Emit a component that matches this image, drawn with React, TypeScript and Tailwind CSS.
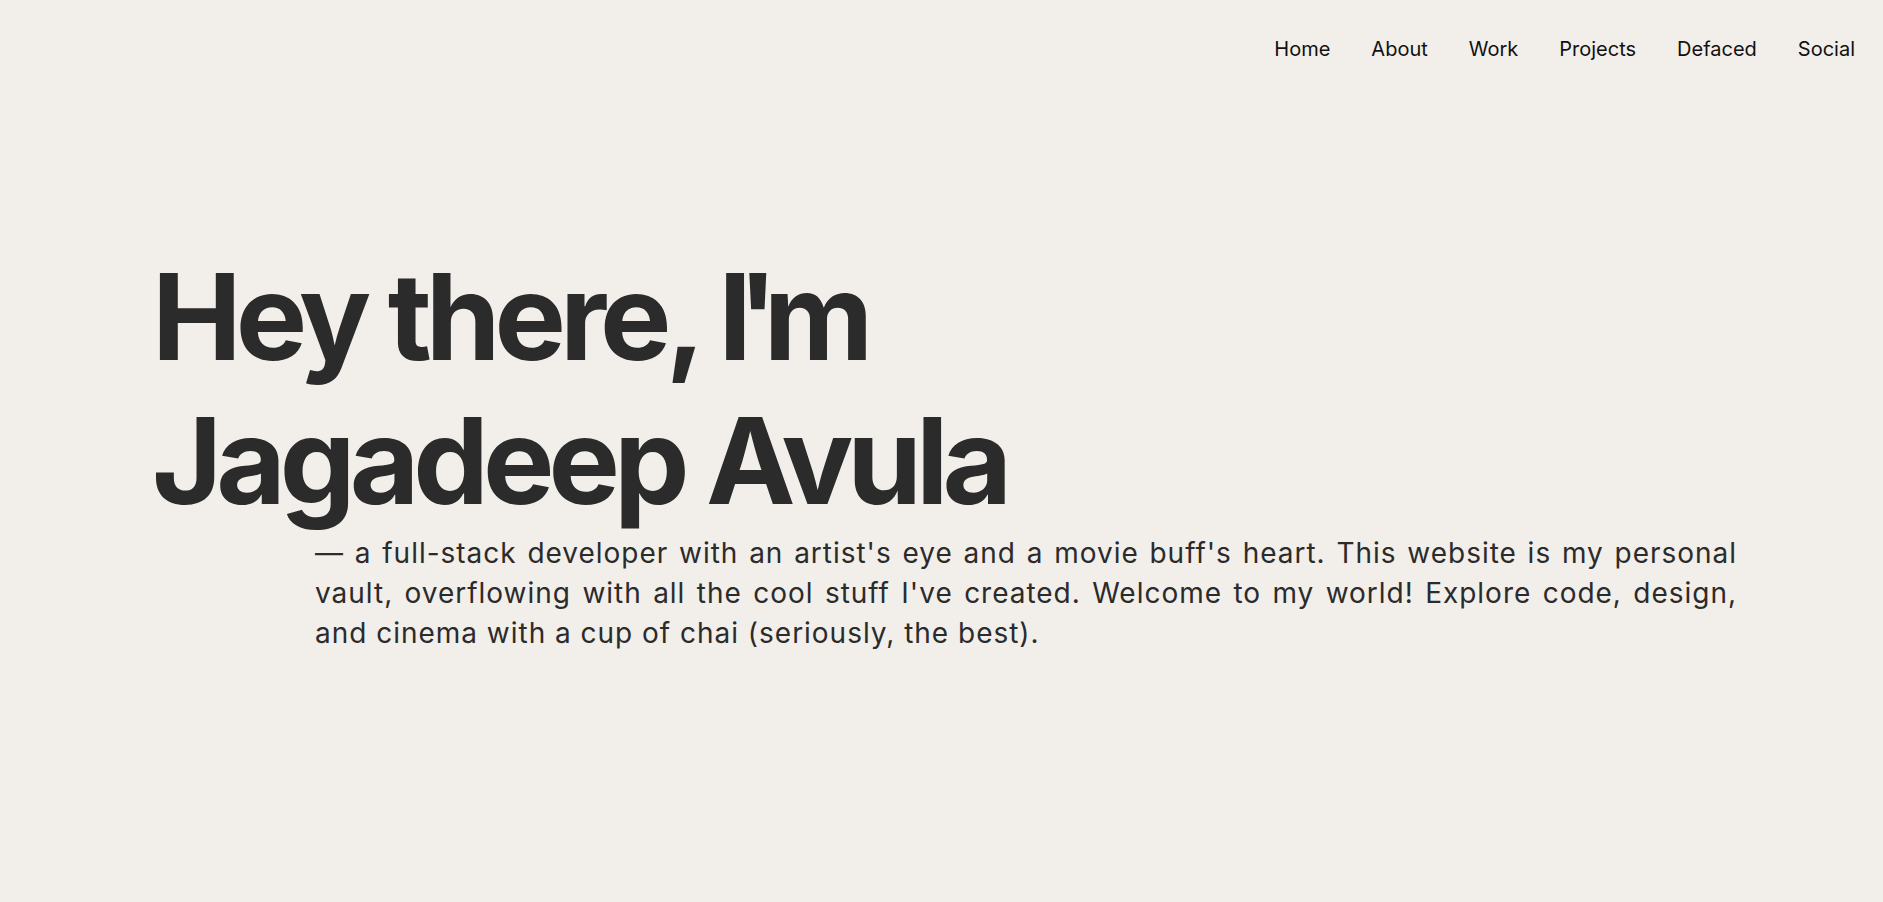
import React from "react";

const links = ["Home", "About", "Work", "Projects", "Defaced", "Social"];

const Navbar = () => {
  return (
    <nav className="flex justify-end pt-[33px] pr-[28px]">
      <ul className="flex items-center gap-[41px]">
        {links.map((link) => (
          <li key={link}>
            <a href="#" className="text-[20px] leading-[32px] text-[#111111]">
              {link}
            </a>
          </li>
        ))}
      </ul>
    </nav>
  );
};

export default function App() {
  return (
    <div
      className="min-h-screen w-full bg-[#f2eeea] text-[#2b2b2b]"
      style={{ fontFamily: "Inter, 'Noto Sans', sans-serif" }}
    >
      <Navbar />
      <main className="pl-[152px] pr-[146px] pt-[180px]">
        <h1 className="text-[120px] leading-[144px] font-bold tracking-[-0.05em] text-[#2b2b2b]">
          Hey there, <span className="tracking-[-0.12em]">I'</span>m
          <br />
          Jagadeep Avula
        </h1>
        <p className="ml-[163px] text-justify text-[28px] leading-[40px] tracking-[0.035em] font-normal text-[#2b2b2b]">
          — a full-stack developer with an artist's eye and a movie buff's
          heart. This website is my personal vault, overflowing with all the
          cool stuff I've created. Welcome to my world! Explore code, design,
          and cinema with a cup of chai (seriously, the best).
        </p>
      </main>
    </div>
  );
}
